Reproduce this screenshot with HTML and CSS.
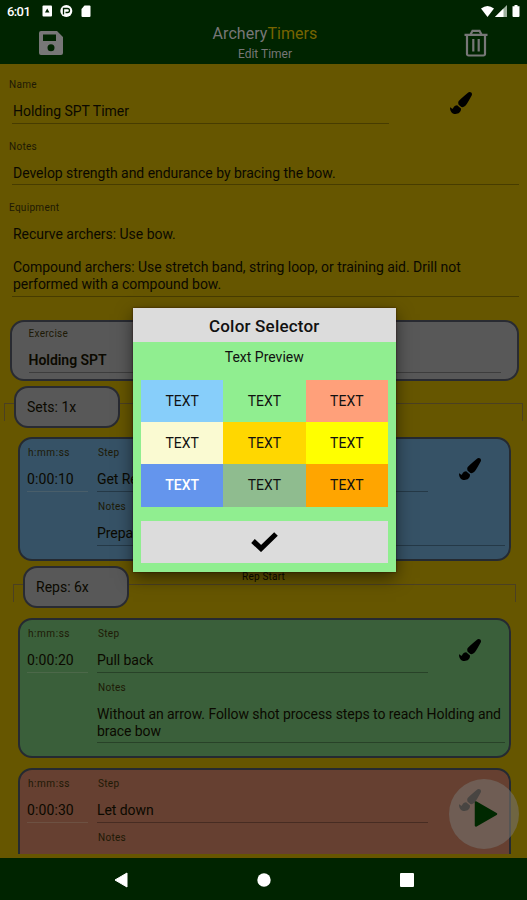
FILE: index.html
```html
<!DOCTYPE html>
<html lang="en">
<head>
<meta charset="utf-8">
<title>ArcheryTimers</title>
<link rel="stylesheet" href="styles.css">
</head>
<body>
<svg width="0" height="0" class="defs"><symbol id="brush" viewBox="0 0 512 512"><path d="M167.02 309.34c-40.12 2.58-76.53 17.86-97.19 72.3-2.35 6.21-8 9.98-14.59 9.98-11.11 0-45.46-27.67-55.25-34.35C0 439.62 37.93 512 128 512c75.86 0 128-43.77 128-120.19 0-3.11-.65-6.08-.97-9.13l-88.01-73.34zM457.89 0c-15.16 0-29.37 6.71-40.21 16.45C213.27 199.05 192 203.34 192 257.09c0 13.7 3.25 26.76 8.73 38.7l63.82 53.18c7.21 1.8 14.64 3.03 22.39 3.03 62.11 0 98.11-45.47 211.16-256.46 7.38-14.35 13.9-29.85 13.9-45.99C512 20.64 486 0 457.89 0z"/></symbol></svg>
<div class="screen">
  <header>
    <div class="status">
      <span class="clock">6:01</span>
      <svg class="notices" width="50" height="14" viewBox="0 0 50 14"><rect x="0.5" y="1.500" width="9.500" height="11" rx="1" fill="#fff"/><path d="M5.200 4.500 7.500 8.500H3z" fill="#002400"/><circle cx="24.300" cy="7" r="6" fill="#fff"/><path d="M21.500 10.500V4.500H25.500a2 2 0 0 1 0 4H23.500" fill="none" stroke="#002400" stroke-width="1.300"/><path d="M42.500 1.500H47.500a1 1 0 0 1 1 1V12a1 1 0 0 1-1 1H40.500a1 1 0 0 1-1-1V5z" fill="#fff"/></svg>
      <svg class="signals" width="42" height="14" viewBox="0 0 42 14"><path d="M1 4.500Q7.500-.5 14 4.500L7.500 13z" fill="#fff"/><path d="M15 13 27 1v12z" fill="#9fb09f"/><path d="M15 13 23.500 4.500V13z" fill="#fff"/><path d="M34.500 1h3v1.300h2V12a1 1 0 0 1-1 1h-5a1 1 0 0 1-1-1V2.300h2z" fill="#fff"/></svg>
    </div>
    <div class="appbar">
      <svg width="24" height="24" viewBox="0 0 24 24"><path fill="#777" fill-rule="evenodd" d="M2 0H18l6 6V22a2 2 0 0 1-2 2H2a2 2 0 0 1-2-2V2a2 2 0 0 1 2-2zM4 3.500v6.500H17V3.500zM12 13.200a3.500 3.500 0 1 0 0 7 3.500 3.500 0 0 0 0-7z"/></svg>
      <div class="titles"><div class="brand">Archery<span>Timers</span></div><div class="sub">Edit Timer</div></div>
      <svg width="24" height="28" viewBox="0 0 24 28" fill="none" stroke="#777" stroke-width="2.200"><path d="M.5 5.800H23.500M6.500 5.500 8.500 1.800h7l2 3.700M3 6V25a1.500 1.500 0 0 0 1.500 1.500h15A1.500 1.500 0 0 0 21 25V6M9.300 10v12.500M14.700 10v12.500"/></svg>
    </div>
  </header>

  <main>
    <section class="form">
      <div class="row">
        <div class="field name"><label>Name</label><div class="value">Holding SPT Timer</div></div>
        <svg class="brush top"><use href="#brush"/></svg>
      </div>
      <div class="field"><label>Notes</label><div class="value">Develop strength and endurance by bracing the bow.</div></div>
      <div class="field"><label>Equipment</label><div class="value">Recurve archers: Use bow.<br><br>Compound archers: Use stretch band, string loop, or training aid. Drill not<br>performed with a compound bow.</div></div>
    </section>

    <section class="exercise"><div class="field"><label>Exercise</label><div class="value">Holding SPT</div></div></section>

    <div class="group sets"><div class="bracket"></div><div class="pill">Sets: 1x</div></div>

    <section class="card blue">
      <div class="field time"><label>h:mm:ss</label><div class="value">0:00:10</div></div>
      <div class="detail">
        <div class="row"><div class="field step"><label>Step</label><div class="value">Get Ready</div></div><svg class="brush"><use href="#brush"/></svg></div>
        <div class="field"><label>Notes</label><div class="value">Prepare</div></div>
      </div>
    </section>

    <div class="group reps"><div class="bracket"></div><div class="pill">Reps: 6x</div><span class="start">Rep Start</span></div>

    <section class="card green">
      <div class="field time"><label>h:mm:ss</label><div class="value">0:00:20</div></div>
      <div class="detail">
        <div class="row"><div class="field step"><label>Step</label><div class="value">Pull back</div></div><svg class="brush"><use href="#brush"/></svg></div>
        <div class="field"><label>Notes</label><div class="value">Without an arrow. Follow shot process steps to reach Holding and<br>brace bow</div></div>
      </div>
    </section>

    <section class="card salmon">
      <div class="field time"><label>h:mm:ss</label><div class="value">0:00:30</div></div>
      <div class="detail">
        <div class="row"><div class="field step"><label>Step</label><div class="value">Let down</div></div><svg class="brush"><use href="#brush"/></svg></div>
        <div class="field"><label>Notes</label></div>
      </div>
    </section>
  </main>

  <nav>
    <svg width="14" height="16" viewBox="0 0 14 16"><path d="M1 8 13 1v14z" fill="#fff" stroke="#fff" stroke-linejoin="round"/></svg>
    <svg width="14" height="14" viewBox="0 0 14 14"><circle cx="7" cy="7" r="6.700" fill="#fff"/></svg>
    <svg width="14" height="14" viewBox="0 0 14 14"><rect width="14" height="14" rx="1" fill="#fff"/></svg>
  </nav>

  <div class="play"><svg width="24" height="28" viewBox="0 0 24 28"><path d="M2 2.500 22 14 2 25.500z" fill="#002800" stroke="#002800" stroke-width="2.500" stroke-linejoin="round"/></svg></div>

  <div class="dialog">
    <h1>Color Selector</h1>
    <p>Text Preview</p>
    <div class="swatches">
      <div class="c1">TEXT</div><div class="c2">TEXT</div><div class="c3">TEXT</div>
      <div class="c4">TEXT</div><div class="c5">TEXT</div><div class="c6">TEXT</div>
      <div class="c7">TEXT</div><div class="c8">TEXT</div><div class="c9">TEXT</div>
    </div>
    <div class="ok"><svg width="27" height="20" viewBox="0 0 27 20"><path d="M2 9 10 16.500 25 2" fill="none" stroke="#000" stroke-width="5.200"/></svg></div>
  </div>
</div>
</body>
</html>
```
FILE: styles.css
```css
* { box-sizing: border-box; }
body { margin: 0; font-family: Roboto, sans-serif; font-size: 14px; color: #0b0900; }
svg { display: block; flex: none; }
.defs { position: absolute; }
.screen { position: relative; width: 527px; height: 900px; overflow: hidden; background: #665600; display: flex; flex-direction: column; }

header { height: 64px; flex: none; background: #002400; }
.status { height: 22px; display: flex; align-items: center; padding: 0 5px 0 7px; color: #fff; }
.clock { font-size: 13px; font-weight: 500; width: 35px; letter-spacing: -.6px; }
.signals { margin-left: auto; }
.appbar { height: 42px; display: flex; justify-content: space-between; align-items: center; padding: 0 39px; }
.titles { text-align: center; line-height: 19px; color: #777; padding: 1px 0 0 3px; }
.brand { font-size: 16px; line-height: 22px; letter-spacing: .05px; }
.brand span { color: #776400; }
.sub { font-size: 12px; }

main { height: 789.500px; flex: none; overflow: hidden; }
.form { display: flex; flex-direction: column; gap: 16px; padding: 14px 8px 0 9px; height: 256px; }
.row { display: flex; }
.field label { display: block; height: 14px; line-height: 14px; font-size: 10px; letter-spacing: .3px; margin-bottom: 11px; color: #1d1905; }
.value { line-height: 16.600px; padding-bottom: 3px; border-bottom: 1px solid rgba(0,0,0,.3); white-space: nowrap; letter-spacing: -.03px; }
.form .value { margin-left: 3px; padding-left: 1px; }
.name { width: 380px; }
.brush { width: 22px; height: 22px; margin: 12px 0 0 31px; fill: #000; }
.brush.top { margin: 14px 0 0 61px; }

.exercise { height: 61px; margin: 0 8.500px 5px 9.500px; background: #585858; border: 2px solid #292b32; border-radius: 14px; padding: 5px 16px 0 17px; }
.exercise .value { font-weight: 600; }

.group { position: relative; height: 42px; }
.bracket { position: absolute; height: 18px; border: 1px solid #4b4022; border-bottom: 0; }
.pill { position: relative; width: 106px; height: 42px; display: flex; align-items: center; padding-left: 11px; background: #585858; border: 2px solid #292b32; border-radius: 14px; }
.sets { margin-bottom: 8.500px; }
.sets .bracket { left: 4px; right: 4px; top: 17px; }
.sets .pill { margin-left: 14px; }
.reps { margin: 5.500px 0 9.500px; }
.reps .bracket { left: 13px; right: 11px; top: 18px; }
.reps .pill { margin-left: 23px; }
.start { position: absolute; left: 0; right: 0; top: 4px; text-align: center; font-size: 10px; line-height: 14px; letter-spacing: .2px; }

.card { margin: 0 16px 0 18px; height: 124px; border: 2px solid #252a31; border-radius: 14px; padding: 7.500px 4px 0 7px; display: flex; gap: 9px; }
.card.green { height: 140px; margin-bottom: 10px; background: #3a5f3a; }
.card.blue { background: #365266; }
.card.salmon { height: 150px; background: #664031; }
.card label { padding-left: 1px; }
.time { width: 61px; }
.time label { letter-spacing: .55px; }
.time .value { border-color: rgba(130,130,120,.25); letter-spacing: .1px; }
.detail { flex: 1; min-width: 0; display: flex; flex-direction: column; gap: 8.500px; }
.detail .value { letter-spacing: -.06px; }
.step { width: 331px; }

nav { height: 42px; margin-top: auto; background: #002400; display: flex; align-items: center; justify-content: space-between; padding: 1px 113px 0 114px; }
.play { position: absolute; left: 449px; top: 779px; width: 70px; height: 70px; border-radius: 50%; background: rgba(117,112,106,.62); display: flex; align-items: center; justify-content: center; padding-left: 3px; }

.dialog { position: absolute; left: 132.500px; top: 308px; width: 263.500px; height: 264px; background: #90ee90; box-shadow: 0 6px 16px rgba(0,0,0,.5), 0 0 2px rgba(40,0,0,.7); text-align: center; color: #111; }
h1 { margin: 0; height: 33.500px; line-height: 36px; font-size: 17px; font-weight: 500; letter-spacing: .2px; background: #dcdcdc; }
p { margin: 0; height: 38.500px; line-height: 31px; }
.swatches { display: grid; grid-template-columns: repeat(3, 1fr); grid-auto-rows: 42.200px; margin: 0 8px 0 8.500px; line-height: 43px; }
.c1 { background: #87cefa; } .c3 { background: #ffa07a; }
.c4 { background: #fafad2; } .c5 { background: #ffd700; } .c6 { background: #ff0; }
.c7 { background: #6495ed; color: #fff; font-weight: 500; } .c8 { background: #8fbc8f; } .c9 { background: #ffa500; }
.ok { height: 42px; margin: 14px 8.500px 0 8.500px; background: #dcdcdc; display: flex; align-items: center; justify-content: center; }
```
